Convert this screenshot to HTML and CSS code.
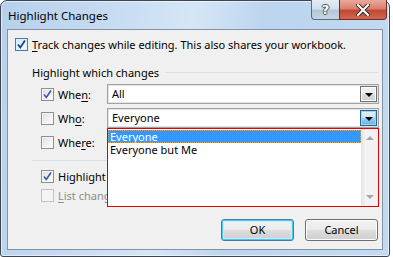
FILE: index.html
```html
<!DOCTYPE html>
<html>
<head>
<meta charset="utf-8">
<link rel="stylesheet" href="styles.css">
</head>
<body>
<div class="window">
  <div class="titlebar">
    <span class="title">Highlight Changes</span>
    <div class="caption-btns">
      <div class="cbtn help"><span>?</span></div>
      <div class="cbtn close">
        <svg width="14" height="12" viewBox="0 0 14 12"><path d="M2 1 L12 11 M12 1 L2 11" stroke="#3a2a2a" stroke-width="4" stroke-linecap="square"/><path d="M2 1 L12 11 M12 1 L2 11" stroke="#ffffff" stroke-width="2" stroke-linecap="square"/></svg>
      </div>
    </div>
  </div>
  <div class="client">
    <div class="check-row track">
      <span class="cb cb-focus"><svg width="11" height="11" viewBox="0 0 11 11"><path d="M2 5.5 L4.3 8.5 L9 1.5" fill="none" stroke="#1f3f96" stroke-width="1.8"/></svg></span>
      <span class="ctext"><u>T</u>rack changes while editing. This also shares your workbook.</span>
    </div>
    <div class="group">
      <div class="group-head"><span>Highlight which changes</span><span class="rule"></span></div>
      <div class="field-row">
        <span class="cb"><svg width="11" height="11" viewBox="0 0 11 11"><path d="M2 5.5 L4.3 8.5 L9 1.5" fill="none" stroke="#3b57a6" stroke-width="1.6"/></svg></span>
        <span class="flabel">Whe<u>n</u>:</span>
        <div class="combo"><span class="val">All</span><span class="drop"><span class="tri"></span></span></div>
      </div>
      <div class="field-row">
        <span class="cb"></span>
        <span class="flabel">Wh<u>o</u>:</span>
        <div class="combo open">
          <span class="val">Everyone</span><span class="drop hot"><span class="tri"></span></span>
          <div class="list">
            <div class="items">
              <div class="item sel">Everyone</div>
              <div class="item">Everyone but Me</div>
            </div>
            <div class="vscroll">
              <span class="arr up"></span>
              <span class="arr down"></span>
            </div>
          </div>
        </div>
      </div>
      <div class="field-row">
        <span class="cb"></span>
        <span class="flabel">Whe<u>r</u>e:</span>
        <div class="combo plain"></div>
      </div>
      <div class="sep"></div>
      <div class="check-row sub">
        <span class="cb"><svg width="11" height="11" viewBox="0 0 11 11"><path d="M2 5.5 L4.3 8.5 L9 1.5" fill="none" stroke="#3b57a6" stroke-width="1.6"/></svg></span>
        <span class="ctext">Highlight changes on <u>s</u>creen</span>
      </div>
      <div class="check-row sub disabled">
        <span class="cb"></span>
        <span class="ctext"><u>L</u>ist changes on a new sheet</span>
      </div>
    </div>
    <div class="buttons">
      <div class="btn default">OK</div>
      <div class="btn">Cancel</div>
    </div>
  </div>
</div>
</body>
</html>
```
FILE: styles.css
```css
* { box-sizing: border-box; }
html, body { margin: 0; padding: 0; background: #ffffff; }
body {
  font-family: "Segoe UI", "Noto Sans", "DejaVu Sans", sans-serif;
  font-size: 11px;
  color: #000;
}
u { text-decoration: underline; text-underline-offset: 2px; }

.window {
  width: 390px;
  height: 257px;
  border: 1px solid #3e4652;
  border-radius: 7px 7px 3px 3px;
  padding: 0 6px 6px 6px;
  display: flex;
  flex-direction: column;
  background: linear-gradient(100deg, #b7d0eb 0%, #c9ddf3 30%, #d6e6f7 45%, #bcd4ee 62%, #c4daf1 100%);
  box-shadow: inset 0 0 0 1px rgba(255,255,255,0.55);
}

.titlebar {
  height: 28px;
  display: flex;
  align-items: flex-start;
  flex: none;
}
.title {
  padding: 6px 0 0 1px;
  line-height: 18px;
  font-size: 11.5px;
  color: #000;
}
.caption-btns {
  margin-left: auto;
  margin-right: -4px;
  margin-top: -1px;
  display: flex;
}
.cbtn {
  height: 20px;
  display: flex;
  align-items: center;
  justify-content: center;
  border: 1px solid #5d6b7c;
  border-top: none;
}
.help {
  width: 28px;
  border-right: none;
  border-radius: 0 0 0 4px;
  background: linear-gradient(180deg, #e3ebf3 0%, #d3dfeb 45%, #b4c6da 55%, #c6d6e6 100%);
}
.help span {
  font-family: "DejaVu Sans", sans-serif;
  font-weight: bold;
  font-size: 13px;
  color: #fff;
  text-shadow: 1px 0 0 #4a5564, -1px 0 0 #4a5564, 0 1px 0 #4a5564, 0 -1px 0 #4a5564;
  line-height: 14px;
}
.close {
  width: 48px;
  border-radius: 0 0 4px 0;
  border-color: #6e2c24;
  background: linear-gradient(180deg, #e9a99c 0%, #d9806f 45%, #c04a33 55%, #d0664e 100%);
}

.client {
  flex: 1;
  background: #f0f0f0;
  border: 1px solid #8393a6;
  display: flex;
  flex-direction: column;
  padding: 8px 3px 8px 7px;
}

.check-row {
  display: flex;
  align-items: center;
  height: 13px;
}
.ctext { margin-left: 4px; white-space: nowrap; line-height: 13px; }

.cb {
  width: 13px;
  height: 13px;
  flex: none;
  border: 1px solid #8f8f8f;
  background: linear-gradient(135deg, #dcdcdc 0%, #f2f2f2 60%, #ffffff 100%);
  box-shadow: inset 0 0 0 1px #f6f6f6;
  display: flex;
  align-items: center;
  justify-content: center;
}
.cb svg { display: block; }
.cb-focus {
  border-color: #3c7fb1;
  background: linear-gradient(135deg, #cbe9f8 0%, #e8f6fd 60%, #f7fcfe 100%);
  box-shadow: inset 0 0 0 1px #def1fb;
}

.group {
  margin-left: 17px;
  margin-top: 14px;
  display: flex;
  flex-direction: column;
}
.group-head {
  display: flex;
  align-items: center;
  height: 14px;
}
.group-head .rule {
  flex: 1;
  height: 1px;
  background: #d5dfe5;
  margin: 1px 1px 0 6px;
}

.field-row {
  display: flex;
  align-items: center;
  height: 24px;
  padding-left: 9px;
}
.group-head + .field-row { margin-top: 3px; }
.flabel { width: 49px; margin-left: 4px; white-space: nowrap; }

.combo {
  flex: 1;
  height: 20px;
  border: 1px solid #a3a3a3;
  box-shadow: inset 0 0 0 1px #e2e3e6;
  background: #fff;
  display: flex;
  align-items: center;
  padding: 1px;
  position: relative;
}
.combo .val { flex: 1; padding-left: 3px; line-height: 16px; }
.drop {
  width: 17px;
  height: 16px;
  border: 1px solid #707070;
  background: linear-gradient(180deg, #f2f2f2 0%, #ebebeb 50%, #dddddd 50%, #cfcfcf 100%);
  display: flex;
  align-items: center;
  justify-content: center;
  box-shadow: inset 0 0 0 1px #fbfbfb;
}
.drop.hot {
  border-color: #2c628b;
  background: linear-gradient(180deg, #e5f4fc 0%, #c4e5f6 50%, #98d1ef 50%, #68b3db 100%);
  box-shadow: inset 0 0 0 1px #9ed4f1;
}
.tri {
  width: 0;
  height: 0;
  border-left: 4px solid transparent;
  border-right: 4px solid transparent;
  border-top: 4px solid #000;
  margin-top: 1px;
}

.list {
  position: absolute;
  left: -1px;
  right: -1px;
  top: 19px;
  height: 79px;
  border: 1px solid #e00000;
  background: #fff;
  display: flex;
  z-index: 5;
}
.items { flex: 1; padding-top: 1px; }
.item {
  height: 13px;
  line-height: 13px;
  padding-left: 2px;
  white-space: nowrap;
}
.item.sel {
  background: #3399ff;
  color: #fff;
  outline: 1px dotted #d9a55a;
  outline-offset: -1px;
}
.vscroll {
  width: 17px;
  background: linear-gradient(90deg, #e5e5e5 0%, #f4f4f4 30%, #f0f0f0 100%);
  display: flex;
  flex-direction: column;
  justify-content: space-between;
  align-items: center;
  padding: 7px 0 7px 0;
}
.arr {
  width: 0;
  height: 0;
  border-left: 4px solid transparent;
  border-right: 4px solid transparent;
}
.arr.up { border-bottom: 4px solid #a8a8a8; }
.arr.down { border-top: 4px solid #a8a8a8; }

.sep {
  height: 1px;
  background: #d5dfe5;
  margin: 6px 1px 0 0;
}
.check-row.sub {
  height: 19px;
  padding-left: 9px;
}
.sep + .check-row.sub { margin-top: 6px; }
.disabled .ctext { color: #8d8d8d; }
.disabled .cb { border-color: #c2c2c2; background: #f4f4f4; box-shadow: none; }

.buttons {
  margin-top: auto;
  display: flex;
  justify-content: flex-end;
  gap: 11px;
  padding-right: 1px;
}
.btn {
  width: 73px;
  height: 22px;
  border: 1px solid #707070;
  border-radius: 3px;
  background: linear-gradient(180deg, #f2f2f2 0%, #ebebeb 50%, #dddddd 50%, #cfcfcf 100%);
  box-shadow: inset 0 0 0 1px #fcfcfc;
  display: flex;
  align-items: center;
  justify-content: center;
  line-height: 14px;
}
.btn.default {
  border-color: #3c7fb1;
  box-shadow: inset 0 0 0 1px #4cc8f2, inset 0 0 0 2px #c8ecfb;
}
```
